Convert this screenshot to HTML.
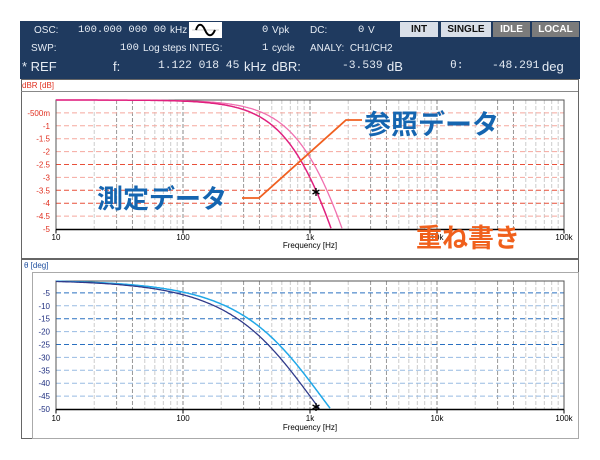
<!DOCTYPE html>
<html><head><meta charset="utf-8"><style>
body{margin:0;width:600px;height:460px;background:#fff;position:relative;overflow:hidden;font-family:"Liberation Sans",sans-serif}
.a{position:absolute;white-space:nowrap}
.hd{position:absolute;left:20px;top:21px;width:560px;height:58px;background:#1f3a5f;color:#e6ecf4;font-size:10px}
.m{font-family:"Liberation Mono",monospace;font-size:10.5px}
.b{position:absolute;top:1px;height:15px;line-height:15px;text-align:center;font-size:10px;font-weight:bold}
.jp{font-family:"Liberation Sans","Noto Sans CJK JP",sans-serif;font-weight:bold}
</style></head><body>
<div class="hd">
<span class="a" style="left:14px;top:4px">OSC:</span>
<span class="a m" style="left:58px;top:3px">100.000 000 00</span><span class="a" style="left:150px;top:4px">kHz</span>
<div class="a" style="left:169px;top:1px;width:33px;height:16px;background:#fff"><svg width="33" height="16"><line x1="3" y1="8" x2="30" y2="8" stroke="#999" stroke-width="0.6"/><path d="M7 8 C9 1,13 1,16 8 S23 15,26 8" fill="none" stroke="#000" stroke-width="2"/></svg></div>
<span class="a m" style="left:242px;top:3px">0</span><span class="a" style="left:252px;top:4px">Vpk</span>
<span class="a" style="left:290px;top:4px">DC:</span>
<span class="a m" style="left:338px;top:3px">0</span><span class="a" style="left:348px;top:4px">V</span>
<div class="b" style="left:380px;width:38px;background:#d9dfe8;color:#111">INT</div>
<div class="b" style="left:421px;width:50px;background:#d9dfe8;color:#111">SINGLE</div>
<div class="b" style="left:473px;width:37px;background:#7b7b7b;color:#fff">IDLE</div>
<div class="b" style="left:512px;width:47px;background:#7b7b7b;color:#fff">LOCAL</div>
<span class="a" style="left:11px;top:22px">SWP:</span>
<span class="a m" style="left:100px;top:21px">100</span><span class="a" style="left:123px;top:22px">Log steps INTEG:</span>
<span class="a m" style="left:242px;top:21px">1</span><span class="a" style="left:252px;top:22px">cycle</span>
<span class="a" style="left:290px;top:22px">ANALY:&nbsp; CH1/CH2</span>
<span class="a" style="left:2px;top:38px;font-size:13px">* REF</span>
<span class="a" style="left:93px;top:38px;font-size:13px">f:</span>
<span class="a m" style="left:138px;top:39px;font-size:11.3px">1.122 018 45</span><span class="a" style="left:224px;top:38px;font-size:13px">kHz</span>
<span class="a" style="left:252px;top:38px;font-size:13px">dBR:</span>
<span class="a m" style="left:322px;top:39px;font-size:11.3px">-3.539</span><span class="a" style="left:367px;top:38px;font-size:13px">dB</span>
<span class="a m" style="left:430px;top:39px;font-size:11.3px">θ:</span>
<span class="a m" style="left:472px;top:39px;font-size:11.3px">-48.291</span><span class="a" style="left:522px;top:38px;font-size:13px">deg</span>
</div>
<svg id="s" class="a" style="left:0;top:0" width="600" height="460"></svg>
<span class="a jp" style="left:364px;top:103px;font-size:27px;color:#1565b0">参照データ</span>
<span class="a jp" style="left:97px;top:179px;font-size:26px;color:#1565b0">測定データ</span>
<span class="a jp" style="left:416px;top:218px;font-size:26px;color:#f0601c">重ね書き</span>
<script>
const s=document.getElementById('s');let h='';
const X=f=>56+127*(Math.log10(f)-1);
h+='<rect x="21.5" y="79.5" width="557" height="179" fill="none" stroke="#666"/>';
h+='<line x1="21" y1="91.5" x2="578" y2="91.5" stroke="#888"/>';
h+='<text x="22" y="88" font-size="8" fill="#e03020">dBR [dB]</text>';
h+='<rect x="21.5" y="259.5" width="557" height="179" fill="none" stroke="#666"/>';
h+='<rect x="32.5" y="272.5" width="546" height="166" fill="none" stroke="#aaa"/>';
h+='<text x="24" y="268" font-size="8" fill="#2050a0">θ [deg]</text>';
function grid(top,bot){for(let d=10;d<100000;d*=10)for(let k=1;k<10;k++){const x=X(d*k);if(k==1&&d==10)continue;
const c=k==1?'#888':(k==3||k==4)?'#999':'#ccc';h+=`<line x1="${x}" y1="${top}" x2="${x}" y2="${bot}" stroke="${c}" stroke-dasharray="4,2"/>`;}}
grid(100,229);grid(281,409);
for(let i=1;i<=10;i++){const y=100+i*12.9;const dark=[5,7,8].includes(i);if(i<10)h+=`<line x1="56" y1="${y}" x2="564" y2="${y}" stroke="${dark?'#e8503a':'#f5a89e'}" stroke-dasharray="5,3"/>`;
const l=i==1?'-500m':'-'+(i/2);h+=`<text x="50" y="${y+3}" font-size="8" fill="#e03020" text-anchor="end">${l}</text>`;}
for(let i=1;i<=10;i++){const y=280+i*12.9;const dark=[1,3,5].includes(i);if(i<10)h+=`<line x1="56" y1="${y}" x2="564" y2="${y}" stroke="${dark?'#2a70c0':'#98bbe2'}" stroke-dasharray="5,3"/>`;
h+=`<text x="50" y="${y+3}" font-size="8" fill="#203080" text-anchor="end">-${i*5}</text>`;}
[[100,229.5,240,248],[281,409.5,421,430]].forEach(([t,b,ly,fy])=>{
h+=`<rect x="56" y="${t}" width="508" height="${b-t}" fill="none" stroke="#555"/>`;
h+=`<line x1="56" y1="${b}" x2="564" y2="${b}" stroke="#000" stroke-width="1.5"/>`;
['10','100','1k','10k','100k'].forEach((l,i)=>{h+=`<line x1="${56+127*i}" y1="${b}" x2="${56+127*i}" y2="${b+4}" stroke="#000"/><text x="${56+127*i}" y="${ly}" font-size="8" text-anchor="middle">${l}</text>`;});
h+=`<text x="310" y="${fy}" font-size="8" text-anchor="middle">Frequency [Hz]</text>`;});
function curve(fc,mag,col,w){let p='';for(let x=56;x<=564;x+=1){const f=Math.pow(10,(x-56)/127+1);const r=f/fc;
let y;if(mag){y=100+(-10*Math.log10(1+r*r))/-5*129;if(y>229)break;}else{y=280+Math.atan(r)*180/Math.PI/50*129;if(y>409)break;}
p+=(p?'L':'M')+x+' '+y.toFixed(1);}h+=`<path d="${p}" fill="none" stroke="${col}" stroke-width="${w}"/>`;}
curve(1220,1,'#f070b0',1.3);curve(1000,1,'#e0207e',1.5);
curve(1220,0,'#20a8e8',1.5);curve(1000,0,'#303a8a',1.3);
h+='<path d="M242 198 L259 198 L346 120 L362 120" fill="none" stroke="#f06020" stroke-width="1.8"/>';
function star(cx,cy){for(let a=0;a<3;a++){const t=a*Math.PI/3+Math.PI/2,dx=4*Math.cos(t),dy=4*Math.sin(t);h+=`<line x1="${cx-dx}" y1="${cy-dy}" x2="${cx+dx}" y2="${cy+dy}" stroke="#000" stroke-width="1.3"/>`;}}
star(316,192);star(316,407);
s.innerHTML=h;
</script>
</body></html>
